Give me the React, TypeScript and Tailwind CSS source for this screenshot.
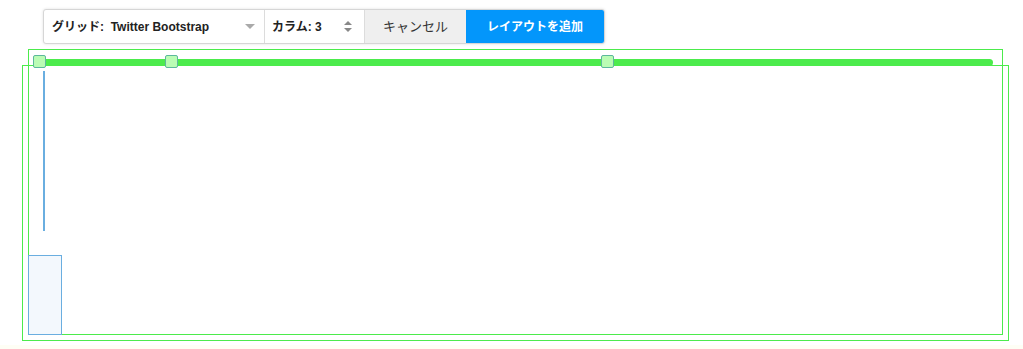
const HANDLES = [33, 165, 601];

function Toolbar() {
  return (
    <div className="ml-[43px] flex h-[35px] w-[562px] overflow-hidden rounded-[3px] border border-[#d6d6d6] bg-white text-[12px] shadow-[0_0_3px_rgba(0,0,0,0.12)]">
      <div className="flex w-[221px] items-center justify-between border-r border-[#dcdcdc] pl-[8px] pr-[9px] font-bold text-[#222]">
        <span>
          グリッド:&nbsp;&nbsp;Twitter Bootstrap
        </span>
        <span className="h-0 w-0 border-x-[5px] border-t-[5px] border-x-transparent border-t-[#aaa]" />
      </div>
      <div className="flex w-[100px] items-center justify-between border-r border-[#dcdcdc] pl-[7px] pr-[12px] font-bold text-[#222]">
        <span>カラム: 3</span>
        <span className="flex flex-col gap-[3px]">
          <span className="h-0 w-0 border-x-[4px] border-b-[4px] border-x-transparent border-b-[#888]" />
          <span className="h-0 w-0 border-x-[4px] border-t-[4px] border-x-transparent border-t-[#888]" />
        </span>
      </div>
      <button className="flex w-[101px] items-center justify-center bg-[#efefef] text-[13px] text-[#333]">
        キャンセル
      </button>
      <button className="flex flex-1 items-center justify-center bg-[#0396fb] font-bold text-white">
        レイアウトを追加
      </button>
    </div>
  );
}

function Canvas() {
  return (
    <div className="relative ml-[28px] mt-[5px] h-[286px] w-[975px] border border-[#4ceb4c]">
      <div className="absolute left-[-7px] top-[15px] h-[276px] w-[987px] border border-[#4ceb4c]" />
      <div className="absolute left-[4px] top-[9px] h-[7px] w-[960px] rounded-r-[4px] bg-[#4ceb4c]" />
      {HANDLES.map((x) => (
        <div
          key={x}
          className="absolute top-[5px] h-[13px] w-[13px] rounded-[2px] border border-[#5cb89c] bg-[#bafcb4]"
          style={{ left: x - 29 }}
        />
      ))}
      <div className="absolute left-[14px] top-[21px] h-[160px] w-[2px] bg-[#6aaee0]" />
      <div className="absolute bottom-[-1px] left-[-1px] h-[80px] w-[34px] border border-[#6aaee0] bg-[#f3f8fd]" />
    </div>
  );
}

export default function App() {
  return (
    <div className="min-h-[349px] bg-[#fefef5]" style={{ fontFamily: '"Liberation Sans", "Noto Sans CJK JP", sans-serif' }}>
      <div className="h-[345px] bg-white pt-[9px]">
        <Toolbar />
        <Canvas />
      </div>
    </div>
  );
}
